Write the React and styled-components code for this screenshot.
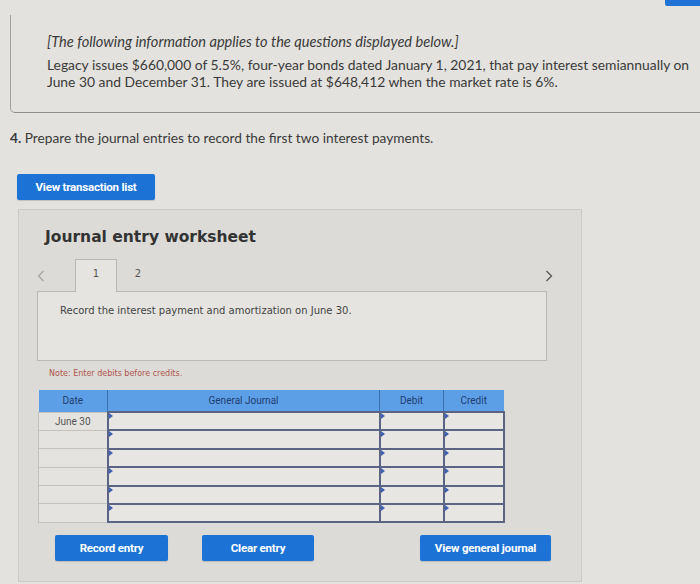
import styled, { createGlobalStyle } from "styled-components";

const GlobalStyle = createGlobalStyle`
  html, body {
    margin: 0;
    padding: 0;
    background: #e3e2de;
  }
  body {
    font-family: Lato, "Open Sans", sans-serif;
    color: #333;
  }
`;

const Page = styled.div`
  width: 700px;
  height: 584px;
  overflow: hidden;
  background: #e3e2de;
`;

const TopStrip = styled.div`
  display: flex;
  justify-content: flex-end;
  height: 15px;
`;

const TopTab = styled.div`
  width: 35px;
  height: 6px;
  background: #1d72d4;
  border-bottom-left-radius: 2px;
`;

const InfoBox = styled.div`
  margin-left: 10px;
  border-left: 1px solid #a2a19e;
  border-bottom: 1px solid #8f8e8b;
  border-bottom-left-radius: 5px;
  padding: 18px 0 22px 36px;
`;

const Intro = styled.p`
  margin: 0 0 5px;
  font-style: italic;
  font-size: 14.6px;
  line-height: 18px;
  color: #3a3a3a;
`;

const Body = styled.p`
  margin: 0;
  font-size: 13.85px;
  line-height: 17px;
  color: #3a3a3a;
  white-space: nowrap;
`;

const Question = styled.p`
  margin: 16px 0 0 10px;
  font-size: 13.7px;
  line-height: 18px;
  color: #3a3a3a;
  b {
    font-weight: 700;
  }
`;

const BlueButton = styled.button`
  display: flex;
  align-items: center;
  justify-content: center;
  width: ${({ $w }) => $w}px;
  height: 26px;
  margin-left: ${({ $ml }) => $ml || 0}px;
  padding: 0;
  border: none;
  border-radius: 2px;
  background: #1d73d5;
  color: #fff;
  font-family: "Liberation Sans Narrow", Roboto, sans-serif;
  font-weight: 700;
  font-size: 11.5px;
  letter-spacing: -0.2px;
  box-shadow: 0 1px 1px rgba(0, 0, 0, 0.15);
`;

const TopButton = styled(BlueButton)`
  margin: 27px 0 0 17px;
`;

const Panel = styled.div`
  width: 564px;
  margin: 9px 0 0 18px;
  padding: 17px 0 20px 0;
  background: #dcdbd7;
  border: 1px solid #cbcac6;
  box-sizing: border-box;
`;

const Title = styled.h2`
  margin: 0 0 0 26px;
  font-family: "DejaVu Sans", Verdana, sans-serif;
  font-weight: 700;
  font-size: 15.5px;
  line-height: 20px;
  color: #333;
`;

const Sheet = styled.div`
  padding-left: 18px;
  width: 516px;
`;

const TabRow = styled.div`
  display: flex;
  align-items: flex-end;
  height: 32px;
  margin-top: 12px;
`;

const Chevron = styled.div`
  align-self: center;
  margin-top: 2px;
  color: ${({ $muted }) => ($muted ? "#a7a6a3" : "#555")};
  display: flex;
  margin-left: ${({ $end }) => ($end ? "auto" : "0")};
`;

const Tab = styled.div`
  display: flex;
  align-items: center;
  justify-content: center;
  width: 42px;
  height: 33px;
  padding-bottom: 5px;
  margin-left: ${({ $ml }) => $ml}px;
  margin-bottom: -1px;
  box-sizing: border-box;
  font-family: "DejaVu Sans", Verdana, sans-serif;
  font-size: 10px;
  color: #555;
  background: ${({ $active }) => ($active ? "#e5e4e0" : "transparent")};
  border: ${({ $active }) => ($active ? "1px solid #b9b8b4" : "1px solid transparent")};
  border-bottom: none;
  position: relative;
  z-index: 1;
`;

const ContentBox = styled.div`
  width: 510px;
  height: 70px;
  box-sizing: border-box;
  background: #e5e4e0;
  border: 1px solid #bbbab6;
  padding: 12px 0 0 22px;
  font-family: "DejaVu Sans", Verdana, sans-serif;
  font-size: 10px;
  line-height: 14px;
  color: #444;
`;

const Note = styled.div`
  margin: 7px 0 0 12px;
  font-family: "DejaVu Sans", Verdana, sans-serif;
  font-size: 8px;
  line-height: 12px;
  color: #b0554c;
`;

const Table = styled.table`
  margin: 10px 0 0 1px;
  border-collapse: collapse;
  width: 465px;
  table-layout: fixed;
  font-family: Roboto, "Liberation Sans", sans-serif;
  font-size: 10px;
`;

const Th = styled.th`
  height: 21px;
  padding: 0;
  background: #5d9fe7;
  color: #1d3d70;
  font-weight: 400;
  border-left: 1px solid #3d6fb0;
  &:first-child {
    border-left: none;
  }
`;

const DateCell = styled.td`
  height: 16.4px;
  padding: 0;
  text-align: center;
  color: #555;
  background: #e4e3df;
  border: 1px solid #c3c2be;
`;

const InputCell = styled.td`
  position: relative;
  height: 16.4px;
  padding: 0;
  background: #e7e6e2;
  border: 2px solid #5b6482;
  &::before {
    content: "";
    position: absolute;
    top: 0;
    left: 0;
    border-top: 3px solid transparent;
    border-bottom: 3px solid transparent;
    border-left: 4px solid #3f63b0;
  }
`;

const ButtonRow = styled.div`
  display: flex;
  align-items: center;
  margin-top: 12px;
  padding-left: 36px;
`;

const ChevronIcon = ({ dir }) => (
  <svg width="8" height="12" viewBox="0 0 8 12">
    <path
      d={dir === "left" ? "M6.5 1 L1.5 6 L6.5 11" : "M1.5 1 L6.5 6 L1.5 11"}
      fill="none"
      stroke="currentColor"
      strokeWidth="1.3"
    />
  </svg>
);

const rows = ["June 30", "", "", "", "", ""];

export default function App() {
  return (
    <Page>
      <GlobalStyle />
      <TopStrip>
        <TopTab />
      </TopStrip>
      <InfoBox>
        <Intro>[The following information applies to the questions displayed below.]</Intro>
        <Body>
          Legacy issues $660,000 of 5.5%, four-year bonds dated January 1, 2021, that pay interest semiannually on
          <br />
          June 30 and December 31. They are issued at $648,412 when the market rate is 6%.
        </Body>
      </InfoBox>
      <Question>
        <b>4.</b> Prepare the journal entries to record the first two interest payments.
      </Question>
      <TopButton $w={138}>View transaction list</TopButton>
      <Panel>
        <Title>Journal entry worksheet</Title>
        <Sheet>
          <TabRow>
            <Chevron $muted>
              <ChevronIcon dir="left" />
            </Chevron>
            <Tab $active $ml={30}>1</Tab>
            <Tab $ml={0}>2</Tab>
            <Chevron $end>
              <ChevronIcon dir="right" />
            </Chevron>
          </TabRow>
          <ContentBox>Record the interest payment and amortization on June 30.</ContentBox>
          <Note>Note: Enter debits before credits.</Note>
          <Table>
            <colgroup>
              <col style={{ width: 69 }} />
              <col style={{ width: 272 }} />
              <col style={{ width: 64 }} />
              <col style={{ width: 60 }} />
            </colgroup>
            <thead>
              <tr>
                <Th>Date</Th>
                <Th>General Journal</Th>
                <Th>Debit</Th>
                <Th>Credit</Th>
              </tr>
            </thead>
            <tbody>
              {rows.map((d, i) => (
                <tr key={i}>
                  <DateCell>{d}</DateCell>
                  <InputCell />
                  <InputCell />
                  <InputCell />
                </tr>
              ))}
            </tbody>
          </Table>
        </Sheet>
        <ButtonRow>
          <BlueButton $w={113}>Record entry</BlueButton>
          <BlueButton $w={112} $ml={34}>Clear entry</BlueButton>
          <BlueButton $w={131} $ml={106}>View general journal</BlueButton>
        </ButtonRow>
      </Panel>
    </Page>
  );
}
